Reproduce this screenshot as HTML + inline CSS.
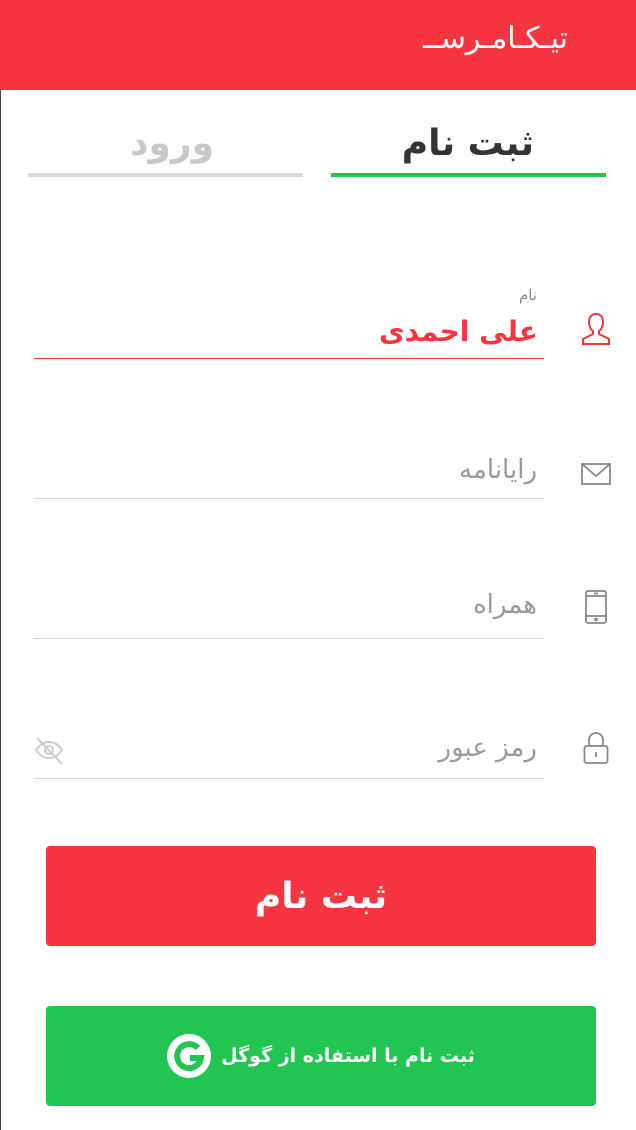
<!DOCTYPE html>
<html><head><meta charset="utf-8"><style>
*{margin:0;padding:0;box-sizing:border-box}
body{width:636px;height:1130px;background:#fff;position:relative;overflow:hidden;font-family:"DejaVu Sans","Noto Sans CJK SC",sans-serif;direction:rtl}
.abs{position:absolute}
.hdr{left:0;top:0;width:636px;height:90px;background:#f73540}
.lb{left:0;top:90px;width:1px;height:1040px;background:#444}
.t{white-space:nowrap;line-height:1}
.line{height:1px;background:#d8d8d8;left:34px;width:510px}
.btn{left:46px;width:550px;height:100px;border-radius:4px;display:flex;align-items:center;justify-content:center;color:#fff;font-weight:bold}
</style></head><body>
<div class="abs hdr"></div>
<div class="abs t" style="right:68px;top:24px;color:#fff;font-size:30px">تیـکـامـرســ</div>
<div class="abs lb"></div>

<div class="abs t" style="right:102px;top:126px;font-size:36px;font-weight:bold;color:#333">ثبت نام</div>
<div class="abs t" style="left:130px;top:126px;font-size:36px;font-weight:bold;color:#c8c8c8">ورود</div>
<div class="abs" style="left:28px;top:173px;width:275px;height:4px;background:#d9d9d9"></div>
<div class="abs" style="left:331px;top:173px;width:275px;height:4px;background:#22c452"></div>

<div class="abs t" style="right:99px;top:288px;font-size:15px;color:#888">نام</div>
<div class="abs t" style="right:98px;top:318px;font-size:28px;font-weight:bold;color:#f73540">علی احمدی</div>
<div class="abs line" style="top:358px;background:#f73540"></div>
<svg class="abs" style="left:578px;top:311px" width="36" height="36" viewBox="0 0 36 36" fill="none" stroke="#f73540" stroke-width="2"><path d="M18 3c-5 0-7 4-7 8s2 8 4 9v3l-10 5v5h26v-5l-10-5v-3c2-1 4-5 4-9s-2-8-7-8z"/></svg>

<div class="abs t" style="right:99px;top:457px;font-size:26px;color:#999">رایانامه</div>
<div class="abs line" style="top:498px"></div>
<svg class="abs" style="left:581px;top:463px" width="30" height="22" viewBox="0 0 30 22" fill="none" stroke="#888" stroke-width="1.8"><rect x="1" y="1" width="28" height="20"/><path d="M1 1l14 12 14-12"/></svg>

<div class="abs t" style="right:99px;top:592px;font-size:26px;color:#999">همراه</div>
<div class="abs line" style="top:638px"></div>
<svg class="abs" style="left:585px;top:590px" width="22" height="34" viewBox="0 0 22 34" fill="none" stroke="#888" stroke-width="1.8"><rect x="1" y="1" width="20" height="32" rx="2"/><path d="M1 6h20M1 26h20M9 3.5h4"/><circle cx="11" cy="29.5" r="1" fill="#888"/></svg>

<div class="abs t" style="right:99px;top:735px;font-size:26px;color:#999">رمز عبور</div>
<div class="abs line" style="top:778px"></div>
<svg class="abs" style="left:583px;top:732px" width="26" height="32" viewBox="0 0 26 32" fill="none" stroke="#888" stroke-width="1.8"><path d="M6 14v-6a7 7 0 0 1 14 0v6"/><rect x="1.5" y="14" width="23" height="17" rx="2"/><path d="M13 20v5"/></svg>
<svg class="abs" style="left:34px;top:736px" width="30" height="30" viewBox="0 0 30 30" fill="none" stroke="#ccc" stroke-width="2"><path d="M2 14c4-6 9-8 13-8s9 2 13 8c-4 6-9 8-13 8s-9-2-13-8z"/><circle cx="15" cy="14" r="4"/><path d="M3 2l25 26"/></svg>

<div class="abs btn" style="top:846px;background:#f73540;font-size:36px">ثبت نام</div>
<div class="abs btn" style="top:1006px;background:#22c452;font-size:19px"><span>ثبت نام با استفاده از گوگل</span>
<svg style="margin-right:10px" width="44" height="44" viewBox="0 0 44 44"><circle cx="22" cy="22" r="22" fill="#fff"/><path d="M31 14a12 12 0 1 0 3 10h-11" fill="none" stroke="#22c452" stroke-width="6"/></svg></div>
</body></html>
